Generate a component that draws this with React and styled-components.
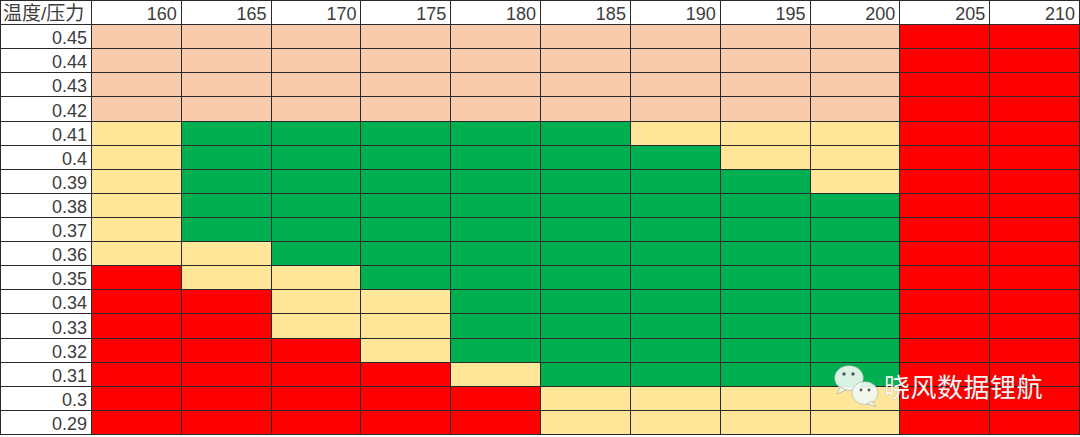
import React from "react"
import styled, { createGlobalStyle } from 'styled-components'

const GlobalStyle = createGlobalStyle`
	html, body {
		margin: 0;
		padding: 0;
		background: #fff;
	}
`

const COLORS = {
	P: '#F8CBAD',
	Y: '#FFE699',
	G: '#00B050',
	R: '#FF0000',
}

const temps = [160, 165, 170, 175, 180, 185, 190, 195, 200, 205, 210]

//PRESSURE ROWS, ONE LETTER PER TEMPERATURE COLUMN
const rows = [
	['0.45', 'PPPPPPPPPRR'],
	['0.44', 'PPPPPPPPPRR'],
	['0.43', 'PPPPPPPPPRR'],
	['0.42', 'PPPPPPPPPRR'],
	['0.41', 'YGGGGGYYYRR'],
	['0.4', 'YGGGGGGYYRR'],
	['0.39', 'YGGGGGGGYRR'],
	['0.38', 'YGGGGGGGGRR'],
	['0.37', 'YGGGGGGGGRR'],
	['0.36', 'YYGGGGGGGRR'],
	['0.35', 'RYYGGGGGGRR'],
	['0.34', 'RRYYGGGGGRR'],
	['0.33', 'RRYYGGGGGRR'],
	['0.32', 'RRRYGGGGGRR'],
	['0.31', 'RRRRYGGGGRR'],
	['0.3', 'RRRRRYYYYRR'],
	['0.29', 'RRRRRYYYYRR'],
]

const Page = styled.div`
	position: relative;
	width: 1080px;
	height: 437px;
	background: #fff;
`

const Sheet = styled.div`
	box-sizing: border-box;
	width: 1080px;
	height: 435px;
	display: grid;
	grid-template-columns: 91px repeat(11, 1fr);
	grid-template-rows: repeat(18, 1fr);
	border-top: 1px solid #2a2a2a;
	border-left: 1px solid #2a2a2a;
	font-family: "Liberation Sans", "Noto Sans CJK SC", sans-serif;
	font-size: 18px;
	color: #3c3c3c;
`

const Cell = styled.div`
	box-sizing: border-box;
	min-width: 0;
	border-right: 1px solid #2a2a2a;
	border-bottom: 1px solid #2a2a2a;
	background: ${p => p.$fill || '#fff'};
	display: flex;
	align-items: flex-end;
	justify-content: ${p => p.$left ? 'flex-start' : 'flex-end'};
	padding: 0 4px 1px ${p => p.$left ? '2px' : '0'};
	line-height: 1;
	white-space: nowrap;
`

const Corner = styled(Cell)`
	font-family: "Liberation Sans", "Noto Sans CJK SC", sans-serif;
	font-size: 19px;
	padding: 0 0 1px 2px;
`

const Watermark = styled.div`
	position: absolute;
	left: 832px;
	top: 363px;
	display: flex;
	align-items: center;
	gap: 4px;
	pointer-events: none;
`

const MarkText = styled.span`
	font-family: "Noto Sans CJK SC", sans-serif;
	font-size: 26px;
	line-height: 1;
	color: rgba(255, 255, 255, 0.95);
	text-shadow: 0 0 1px rgba(90, 90, 90, 0.5);
	letter-spacing: 0.5px;
`

const WechatLogo = () => (
	<svg width="48" height="46" viewBox="0 0 48 46">
		<g fill="rgba(240,250,244,0.9)" stroke="rgba(120,120,120,0.45)" strokeWidth="0.8">
			<ellipse cx="17" cy="15" rx="14.5" ry="12.5"/>
			<path d="M8 24 L5 31 L14 27 Z"/>
			<ellipse cx="33" cy="30" rx="13" ry="11.5"/>
			<path d="M40 38 L44 44 L35 40.5 Z"/>
		</g>
		<g fill="#555">
			<circle cx="12" cy="11" r="1.7"/>
			<circle cx="21" cy="11" r="1.7"/>
			<circle cx="29" cy="27" r="1.4"/>
			<circle cx="37" cy="27" r="1.4"/>
		</g>
	</svg>
)

export default function App(){
	return(
		<Page>
			<GlobalStyle/>
			<Sheet>
				<Corner $left>温度/压力</Corner>
				{temps.map(t => <Cell key={t}>{t}</Cell>)}
				{rows.map(([label, fills]) => (
					<React.Fragment key={label}>
						<Cell>{label}</Cell>
						{fills.split('').map((c, i) => <Cell key={i} $fill={COLORS[c]}/>)}
					</React.Fragment>
				))}
			</Sheet>
			<Watermark>
				<WechatLogo/>
				<MarkText>晓风数据锂航</MarkText>
			</Watermark>
		</Page>
	)
}
